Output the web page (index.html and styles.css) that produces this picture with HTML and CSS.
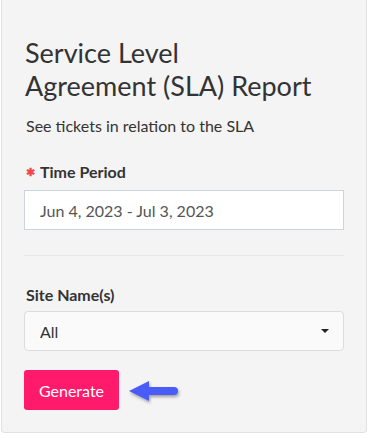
FILE: index.html
```html
<!DOCTYPE html>
<html lang="en">
<head>
  <meta charset="UTF-8" />
  <meta name="viewport" content="width=device-width, initial-scale=1.0" />
  <title>SLA Report</title>
  <link rel="stylesheet" href="styles.css">
</head>
<body>
  <div class="card">
    <h1>Service Level<br>Agreement (SLA) Report</h1>
    <p class="subtitle">See tickets in relation to the SLA</p>

    <label class="field-label"><span class="required">&#x2731;</span>Time Period</label>
    <div class="input">Jun 4, 2023 - Jul 3, 2023</div>

    <hr class="divider" />

    <label class="field-label">Site Name(s)</label>
    <div class="select">
      <span>All</span>
      <span class="caret"></span>
    </div>

    <div class="actions">
      <button class="btn-generate">Generate</button>
      <svg class="pointer" width="56" height="32" viewBox="0 0 56 32">
        <defs>
          <filter id="shadow" x="-20%" y="-30%" width="140%" height="160%">
            <feDropShadow dx="1" dy="2" stdDeviation="1.5" flood-color="#000" flood-opacity="0.35" />
          </filter>
        </defs>
        <g filter="url(#shadow)">
          <polygon points="3,16 23,6 23,26" fill="#4a5cf7" />
          <path d="M20 16 H48" stroke="#4a5cf7" stroke-width="8" stroke-linecap="round" />
        </g>
      </svg>
    </div>
  </div>
</body>
</html>
```

FILE: styles.css
```css
body {
  margin: 0;
  background: #fff;
  font-family: 'Source Sans Pro', 'Lato', sans-serif;
  color: #333;
}

.card {
  box-sizing: border-box;
  width: 366px;
  height: 433px;
  margin-left: 1px;
  padding: 36px 22px 0 22px;
  background: #f4f4f4;
  border: 1px solid #e2e2e2;
  border-top: none;
  border-radius: 0 0 4px 4px;
}

h1 {
  margin: 0;
  padding-left: 1px;
  font-size: 27px;
  font-weight: 400;
  line-height: 33px;
  color: #333;
}

.subtitle {
  margin: 14px 0 0;
  padding-left: 2px;
  font-size: 16px;
  line-height: 20px;
}

.field-label {
  display: block;
  margin-top: 26px;
  margin-bottom: 8px;
  padding-left: 2px;
  font-size: 16px;
  font-weight: 700;
  line-height: 20px;
}

.required {
  color: #f0474b;
  font-size: 11px;
  margin-right: 5px;
  vertical-align: 2px;
}

.input {
  box-sizing: border-box;
  height: 40px;
  padding: 0 15px;
  display: flex;
  align-items: center;
  background: #fff;
  border: 1px solid #cfd4dc;
  font-size: 16px;
  color: #555;
}

.divider {
  margin: 25px 0 0;
  border: none;
  border-top: 1px solid #e7e7e7;
}

.divider + .field-label {
  margin-top: 29px;
  margin-bottom: 6px;
}

.select {
  box-sizing: border-box;
  height: 40px;
  padding: 0 14px 0 15px;
  display: flex;
  align-items: center;
  justify-content: space-between;
  background: #fafafa;
  border: 1px solid #dcdcdc;
  border-radius: 4px;
  font-size: 16px;
  color: #333;
}

.caret {
  width: 0;
  height: 0;
  border-left: 4px solid transparent;
  border-right: 4px solid transparent;
  border-top: 4px solid #222;
}

.actions {
  display: flex;
  align-items: center;
  gap: 7px;
  margin-top: 19px;
}

.btn-generate {
  height: 40px;
  width: 95px;
  padding: 0;
  border: none;
  border-radius: 3px;
  background: #ff1a6c;
  color: #fff;
  font-family: inherit;
  font-size: 16px;
}

.pointer {
  display: block;
  margin-top: 2px;
}
```
